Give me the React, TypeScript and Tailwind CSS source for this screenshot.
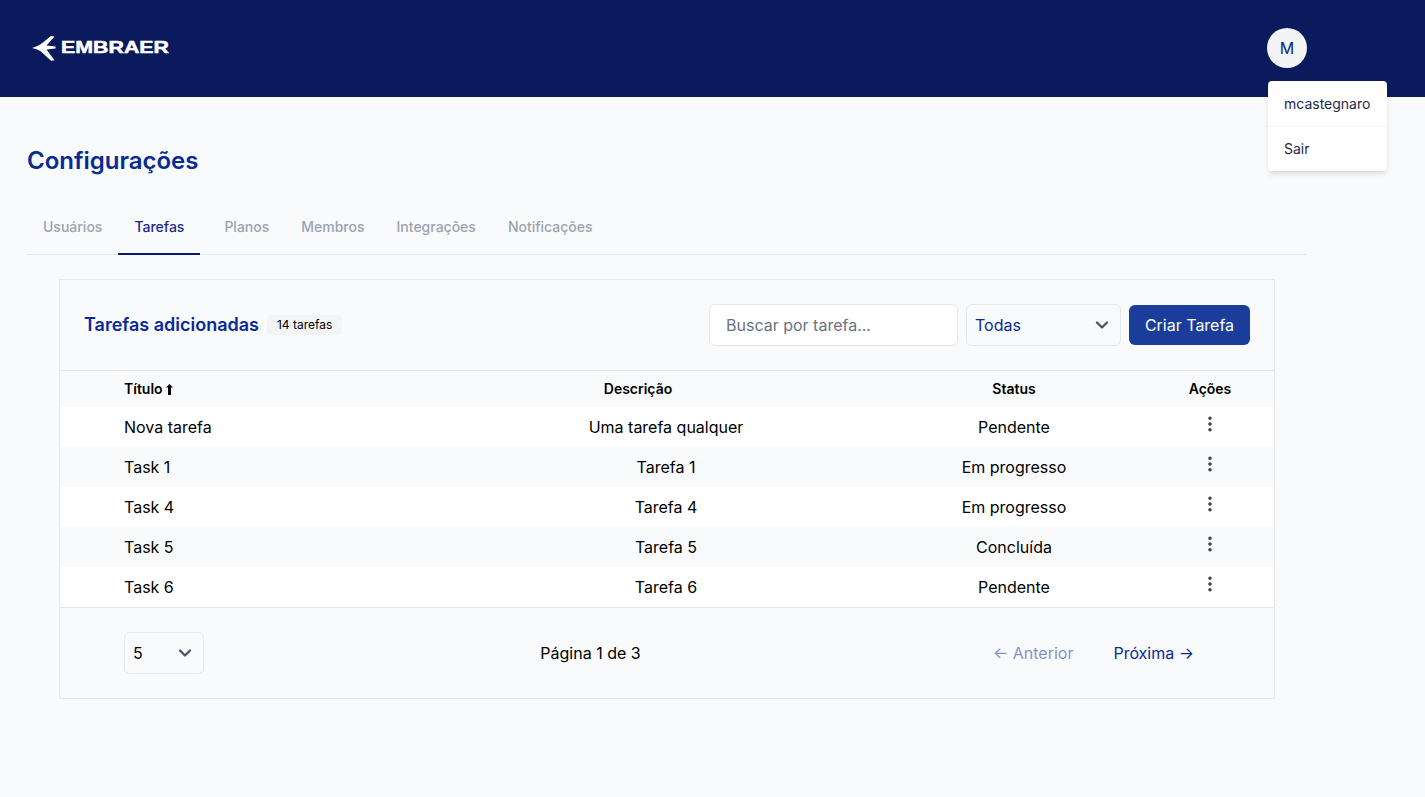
import { ChevronDown, EllipsisVertical } from 'lucide-react'

const abas = ['Usuários', 'Tarefas', 'Planos', 'Membros', 'Integrações', 'Notificações']

const tarefas = [
  { titulo: 'Nova tarefa', descricao: 'Uma tarefa qualquer', status: 'Pendente' },
  { titulo: 'Task 1', descricao: 'Tarefa 1', status: 'Em progresso' },
  { titulo: 'Task 4', descricao: 'Tarefa 4', status: 'Em progresso' },
  { titulo: 'Task 5', descricao: 'Tarefa 5', status: 'Concluída' },
  { titulo: 'Task 6', descricao: 'Tarefa 6', status: 'Pendente' },
]

const colunas = 'grid grid-cols-[390px_432px_264px_128px]'

function Logo() {
  return (
    <div className="flex items-center">
      <svg width="24" height="25" viewBox="0 0 24 25" fill="white" aria-hidden="true">
        <path d="M0 12 C4 10.8 7 9.5 9 8 L19 0 L22.5 0.4 L14.5 9.6 L23.5 10.6 L23.5 12.4 L14.5 13.4 L22.5 24.2 L19 24.8 L9 15.5 C7 14 4 13 0 12 Z" />
      </svg>
      <span className="ml-[5px] inline-block origin-left scale-x-[1.28] font-['Liberation_Sans',sans-serif] text-[16.7px] leading-none font-bold text-white [-webkit-text-stroke:0.5px_white]">
        EMBRAER
      </span>
    </div>
  )
}

function Selecao({ valor, className }: { valor: string; className: string }) {
  return (
    <div
      className={`flex h-[42px] items-center justify-between rounded-md border border-[#e5e7eb] pr-[8px] pl-[8px] ${className}`}
    >
      <span>{valor}</span>
      <ChevronDown size={20} strokeWidth={2.8} className="text-[#4b5563]" />
    </div>
  )
}

export default function App() {
  return (
    <div className="relative min-h-[797px] bg-[#f9fafb] font-['Inter',sans-serif] text-black">
      <header className="flex h-[97px] items-center justify-between bg-[#0a1a5c] pr-[118px] pl-[32px]">
        <Logo />
        <div className="mb-px flex h-10 w-10 items-center justify-center rounded-full bg-[#f3f4f6] text-base text-[#0a2a6c]">
          M
        </div>
      </header>

      <div className="absolute top-[81px] left-[1268px] w-[119px] rounded bg-white text-sm text-[#1f2a44] shadow-md">
        <div className="flex h-[46px] items-center border-b border-[#f3f4f6] pt-px pl-[16px]">mcastegnaro</div>
        <div className="flex h-[44px] items-center pl-[16px]">Sair</div>
      </div>

      <main className="pt-[48px] pr-[118px] pl-[27px]">
        <h1 className="text-2xl leading-8 font-semibold text-[#0a2a96]">Configurações</h1>

        <nav className="mt-[22px] flex h-[56px] border-b border-[#e5e7eb] text-sm font-medium text-[#9ca3af]">
          {abas.map((aba) =>
            aba === 'Tarefas' ? (
              <div
                key={aba}
                className="-mb-px mr-2 flex w-[82px] items-center justify-start border-b-2 border-[#0a1a6c] pt-px pl-[16px] text-[#1e2a8a]"
              >
                {aba}
              </div>
            ) : (
              <div key={aba} className="flex items-center px-4">
                {aba}
              </div>
            ),
          )}
        </nav>

        <section className="mt-6 ml-[32px] w-[1216px] border border-[#e5e7eb]">
          <div className="flex h-[91px] items-center justify-between border-b border-[#e5e7eb] px-6">
            <div className="flex items-center gap-2">
              <h2 className="text-lg font-semibold text-[#0a2a96]">Tarefas adicionadas</h2>
              <span className="flex h-5 items-center rounded-sm bg-[#f3f4f6] px-[10px] text-xs">14 tarefas</span>
            </div>
            <div className="flex items-center gap-2">
              <input
                type="text"
                placeholder="Buscar por tarefa..."
                className="h-[42px] w-[249px] rounded-md border border-[#e5e7eb] bg-white px-4 text-base placeholder:text-[#6b7280]"
              />
              <Selecao valor="Todas" className="w-[155px] text-base text-[#0a2a96]" />
              <button className="h-10 w-[121px] rounded-md bg-[#1a3d9b] text-base text-white">Criar Tarefa</button>
            </div>
          </div>

          <div className={`${colunas} h-[36px] items-center text-sm font-semibold`}>
            <div className="flex items-center gap-[3px] pl-[64px]">
              Título
              <svg width="7" height="11" viewBox="0 0 7 11" fill="currentColor" aria-hidden="true">
                <path d="M3.5 0 L7 3.5 L5 3.5 L5 11 L2 11 L2 3.5 L0 3.5 Z" />
              </svg>
            </div>
            <div className="pr-[56px] text-center">Descrição</div>
            <div className="text-center">Status</div>
            <div className="text-center">Ações</div>
          </div>

          {tarefas.map((t, i) => (
            <div
              key={t.titulo}
              className={`${colunas} h-10 items-center text-base ${i % 2 === 0 ? 'bg-white' : 'bg-[#f9fafb]'}`}
            >
              <div className="pl-[64px]">{t.titulo}</div>
              <div className="text-center">{t.descricao}</div>
              <div className="text-center">{t.status}</div>
              <div className="-mt-[6px] flex justify-center">
                <EllipsisVertical size={20} strokeWidth={2.2} className="text-[#374151]" />
              </div>
            </div>
          ))}

          <div className="flex h-[91px] items-center justify-between border-t border-[#e5e7eb] pr-[64px] pl-[64px] text-base">
            <Selecao valor="5" className="w-20" />
            <span>Página 1 de 3</span>
            <div className="flex gap-2">
              <button className="px-4 text-[#0a2a96] opacity-50">← Anterior</button>
              <button className="px-4 text-[#0a2a96]">Próxima →</button>
            </div>
          </div>
        </section>
      </main>
    </div>
  )
}
